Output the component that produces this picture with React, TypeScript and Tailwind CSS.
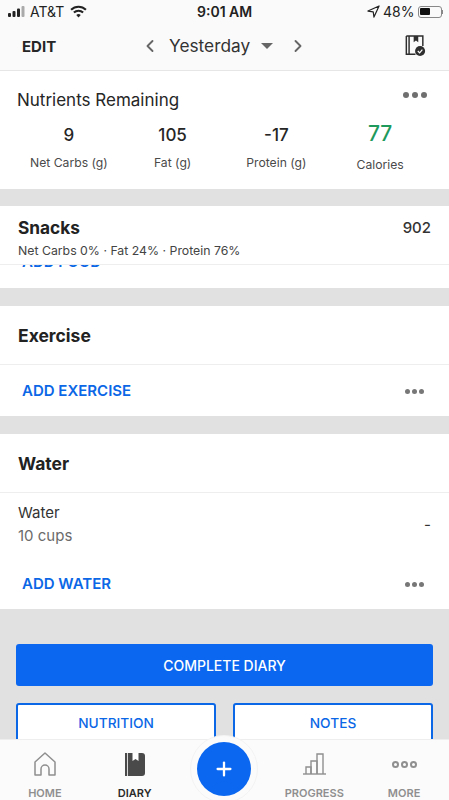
import { ChevronLeft, ChevronRight, Plus } from 'lucide-react';

const stats = [
  { value: '9', label: 'Net Carbs (g)' },
  { value: '105', label: 'Fat (g)' },
  { value: '-17', label: 'Protein (g)' },
];

function StatusBar() {
  return (
    <div className="h-[23px] flex items-center justify-between pl-[8px] pr-[6px] text-[14px] text-[#222] relative">
      <div className="flex items-center gap-[5px]">
        <svg width="17" height="11" viewBox="0 0 17 11" fill="#222">
          <rect x="0" y="7" width="3" height="4" rx="1" />
          <rect x="4.5" y="5" width="3" height="6" rx="1" />
          <rect x="9" y="2.5" width="3" height="8.5" rx="1" />
          <rect x="13.5" y="0" width="3" height="11" rx="1" fill="#aaa" />
        </svg>
        <span>AT&amp;T</span>
        <svg width="17" height="13" viewBox="0 0 24 18" fill="none" stroke="#222" strokeWidth="3" className="ml-[1px]">
          <path d="M1.5 6.5a15 15 0 0 1 21 0" />
          <path d="M5.5 10.5a9.5 9.5 0 0 1 13 0" />
          <path d="M12 17.5l-3.2-3.4a4.5 4.5 0 0 1 6.4 0z" fill="#222" stroke="none" />
        </svg>
      </div>
      <span className="absolute left-[197px] font-semibold">9:01 AM</span>
      <div className="flex items-center gap-[3px]">
        <svg width="13" height="13" viewBox="0 0 14 14" fill="none" stroke="#222" strokeWidth="1.3">
          <path d="M13 1L1 6.5l5.7.8.8 5.7z" strokeLinejoin="round" />
        </svg>
        <span>48%</span>
        <div className="flex items-center">
          <div className="w-[24px] h-[12px] rounded-[3px] border border-[#888] p-[1.5px]">
            <div className="w-[10px] h-full rounded-[1px] bg-[#111]" />
          </div>
          <div className="w-[1.5px] h-[4px] bg-[#888]" />
        </div>
      </div>
    </div>
  );
}

function Header() {
  return (
    <div className="h-[48px] flex items-center relative border-b border-[#e6e6e6] bg-[#fafafa]">
      <span className="ml-[22px] mt-[2px] font-bold text-[15px] text-[#262626]">EDIT</span>
      <div className="absolute left-[140px] top-[10px] flex items-center text-[#333]">
        <ChevronLeft size={20} strokeWidth={2.25} className="text-[#666]" />
        <span className="ml-[9px] text-[17.3px] leading-[26px]">Yesterday</span>
        <span className="ml-[11px] w-0 h-0 border-l-[6px] border-r-[6px] border-t-[6px] border-l-transparent border-r-transparent border-t-[#666]" />
        <ChevronRight size={20} strokeWidth={2.25} className="ml-[15px] text-[#666]" />
      </div>
      <svg width="21" height="22" viewBox="0 0 22 24" className="absolute left-[405px] top-[12px]" fill="none" stroke="#2e2e2e" strokeWidth="1.6">
        <path d="M1 1h18v11" />
        <path d="M1 1v20h10" />
        <path d="M4 1v20" />
        <path d="M9 1v7l2.5-2 2.5 2V1" fill="#2e2e2e" stroke="none" />
        <circle cx="16" cy="17.5" r="5.5" fill="#2e2e2e" stroke="none" />
        <path d="M13.5 17.5l2 2 3-3.5" stroke="#fff" strokeWidth="1.3" />
      </svg>
    </div>
  );
}

function Nutrients() {
  return (
    <div className="h-[118px] bg-white relative">
      <div className="pl-[17px] pt-[17px] text-[17px] leading-[24px] text-[#262626]">Nutrients Remaining</div>
      <div className="absolute right-[22px] top-[21px] flex gap-[3px]">
        <span className="w-[6px] h-[6px] rounded-full bg-[#6f6f6f]" />
        <span className="w-[6px] h-[6px] rounded-full bg-[#6f6f6f]" />
        <span className="w-[6px] h-[6px] rounded-full bg-[#6f6f6f]" />
      </div>
      <div className="grid grid-cols-4 px-[17px] mt-[11px]">
        {stats.map((s) => (
          <div key={s.label} className="flex flex-col items-center">
            <span className="text-[17px] leading-[24px] font-medium text-[#262626]">{s.value}</span>
            <span className="mt-[6px] text-[12.2px] leading-[20px] text-[#4a4a4a]">{s.label}</span>
          </div>
        ))}
        <div className="flex flex-col items-center -mt-[2px]">
          <span className="text-[21px] leading-[26px] font-medium text-[#1f9a5d]">77</span>
          <span className="mt-[8px] text-[12.2px] leading-[20px] text-[#4a4a4a]">Calories</span>
        </div>
      </div>
    </div>
  );
}

function Gap() {
  return <div className="h-[18px] bg-[#e1e1e1]" />;
}

function AddRow({ label }: { label: string }) {
  return (
    <div className="h-[51px] pt-[2px] flex items-center justify-between pl-[22px] pr-[25px]">
      <span className="text-[15px] font-semibold text-[#0b67e6]">{label}</span>
      <div className="flex gap-[2px]">
        <span className="w-[5px] h-[5px] rounded-full bg-[#777]" />
        <span className="w-[5px] h-[5px] rounded-full bg-[#777]" />
        <span className="w-[5px] h-[5px] rounded-full bg-[#777]" />
      </div>
    </div>
  );
}

function NavIcon({ children, label, active }: { children: React.ReactNode; label: string; active?: boolean }) {
  return (
    <div className="w-[90px] flex flex-col items-center pt-[11px]">
      <div className="h-[26px] flex items-center">{children}</div>
      <span className={'mt-[9px] text-[11px] leading-[14px] font-semibold ' + (active ? 'text-[#2b2b2b]' : 'text-[#8f8f8f]')}>{label}</span>
    </div>
  );
}

export default function App() {
  return (
    <div className="w-[449px] h-[800px] overflow-hidden bg-[#e1e1e1] relative font-['Inter','Liberation_Sans',sans-serif]">
      <div className="bg-[#fafafa]">
        <StatusBar />
        <Header />
      </div>
      <Nutrients />
      <div className="h-[17px] bg-[#e1e1e1]" />

      <div className="h-[59px] bg-white relative border-b border-[#eeeeee] pl-[18px] pt-[10px]">
        <div className="text-[17.3px] leading-[24px] font-bold text-[#222]">Snacks</div>
        <div className="mt-[2px] text-[12.3px] leading-[18px] text-[#444]">Net Carbs 0% · Fat 24% · Protein 76%</div>
        <span className="absolute right-[18px] top-[12px] text-[15px] leading-[20px] font-medium text-[#333]">902</span>
      </div>
      <div className="h-[23px] bg-white overflow-hidden pl-[22px]">
        <div className="-mt-[13px] text-[15px] leading-[20px] font-semibold text-[#0b67e6]">ADD FOOD</div>
      </div>
      <Gap />

      <div className="bg-white">
        <div className="h-[59px] pt-[2px] flex items-center pl-[18px] border-b border-[#eeeeee] text-[17.5px] font-bold text-[#222]">Exercise</div>
        <AddRow label="ADD EXERCISE" />
      </div>
      <Gap />

      <div className="bg-white">
        <div className="h-[59px] pt-[2px] flex items-center pl-[18px] border-b border-[#eeeeee] text-[17.5px] font-bold text-[#222]">Water</div>
        <div className="h-[65px] relative pl-[18px] pt-[9px]">
          <div className="text-[15px] leading-[22px] text-[#333]">Water</div>
          <div className="text-[15px] leading-[24px] text-[#6b6b6b]">10 cups</div>
          <span className="absolute right-[18px] top-[22px] text-[15px] leading-[20px] text-[#333]">-</span>
        </div>
        <AddRow label="ADD WATER" />
      </div>

      <div className="px-[16px] pt-[35px]">
        <div className="h-[42px] rounded-[3px] bg-[#0b67f0] flex items-center justify-center text-[14px] font-medium text-white">COMPLETE DIARY</div>
        <div className="mt-[17px] grid grid-cols-2 gap-[17px]">
          <div className="h-[44px] pb-[4px] rounded-[3px] border-2 border-[#0b67e6] bg-white flex items-center justify-center text-[13.7px] font-medium text-[#0b67e6]">NUTRITION</div>
          <div className="h-[44px] pb-[4px] rounded-[3px] border-2 border-[#0b67e6] bg-white flex items-center justify-center text-[13.7px] font-medium text-[#0b67e6]">NOTES</div>
        </div>
      </div>

      <div className="absolute left-0 right-0 bottom-0 h-[61px] bg-[#fbfbfb] border-t border-[#eeeeee] flex">
        <NavIcon label="HOME">
          <svg width="22" height="24" viewBox="0 0 22 24" fill="none" stroke="#8f8f8f" strokeWidth="1.5" strokeLinejoin="round">
            <path d="M1 10L11 1l10 9v13h-6v-6a4 4 0 0 0-8 0v6H1z" />
          </svg>
        </NavIcon>
        <NavIcon label="DIARY" active>
          <svg width="21" height="23" viewBox="0 0 21 23">
            <path d="M1 0h17a3 3 0 0 1 3 3v17a3 3 0 0 1-3 3H1z" fill="#4a4a4a" />
            <path d="M3.5 0v23" stroke="#fff" strokeWidth="0.8" />
            <path d="M8.5 0h6v8l-3-2-3 2z" fill="#fff" />
          </svg>
        </NavIcon>
        <div className="w-[90px]" />
        <NavIcon label="PROGRESS">
          <svg width="23" height="22" viewBox="0 0 23 22" fill="none" stroke="#8f8f8f" strokeWidth="1.4">
            <path d="M0 21h23" />
            <path d="M3 21v-7h5v7" />
            <path d="M8 21V8h6v13" />
            <path d="M14 21V1h6v20" />
          </svg>
        </NavIcon>
        <NavIcon label="MORE">
          <div className="flex gap-[2px]">
            <span className="w-[7px] h-[7px] rounded-full border-2 border-[#8f8f8f]" />
            <span className="w-[7px] h-[7px] rounded-full border-2 border-[#8f8f8f]" />
            <span className="w-[7px] h-[7px] rounded-full border-2 border-[#8f8f8f]" />
          </div>
        </NavIcon>
      </div>
      <div className="absolute left-[190px] top-[735px] w-[68px] h-[68px] rounded-full bg-[#fbfbfb] border border-[#f3f3f3]" />
      <div className="absolute left-[197px] top-[742px] w-[54px] h-[54px] rounded-full bg-[#0b67f0] flex items-center justify-center">
        <Plus size={22} strokeWidth={2.5} className="text-white" />
      </div>
    </div>
  );
}
